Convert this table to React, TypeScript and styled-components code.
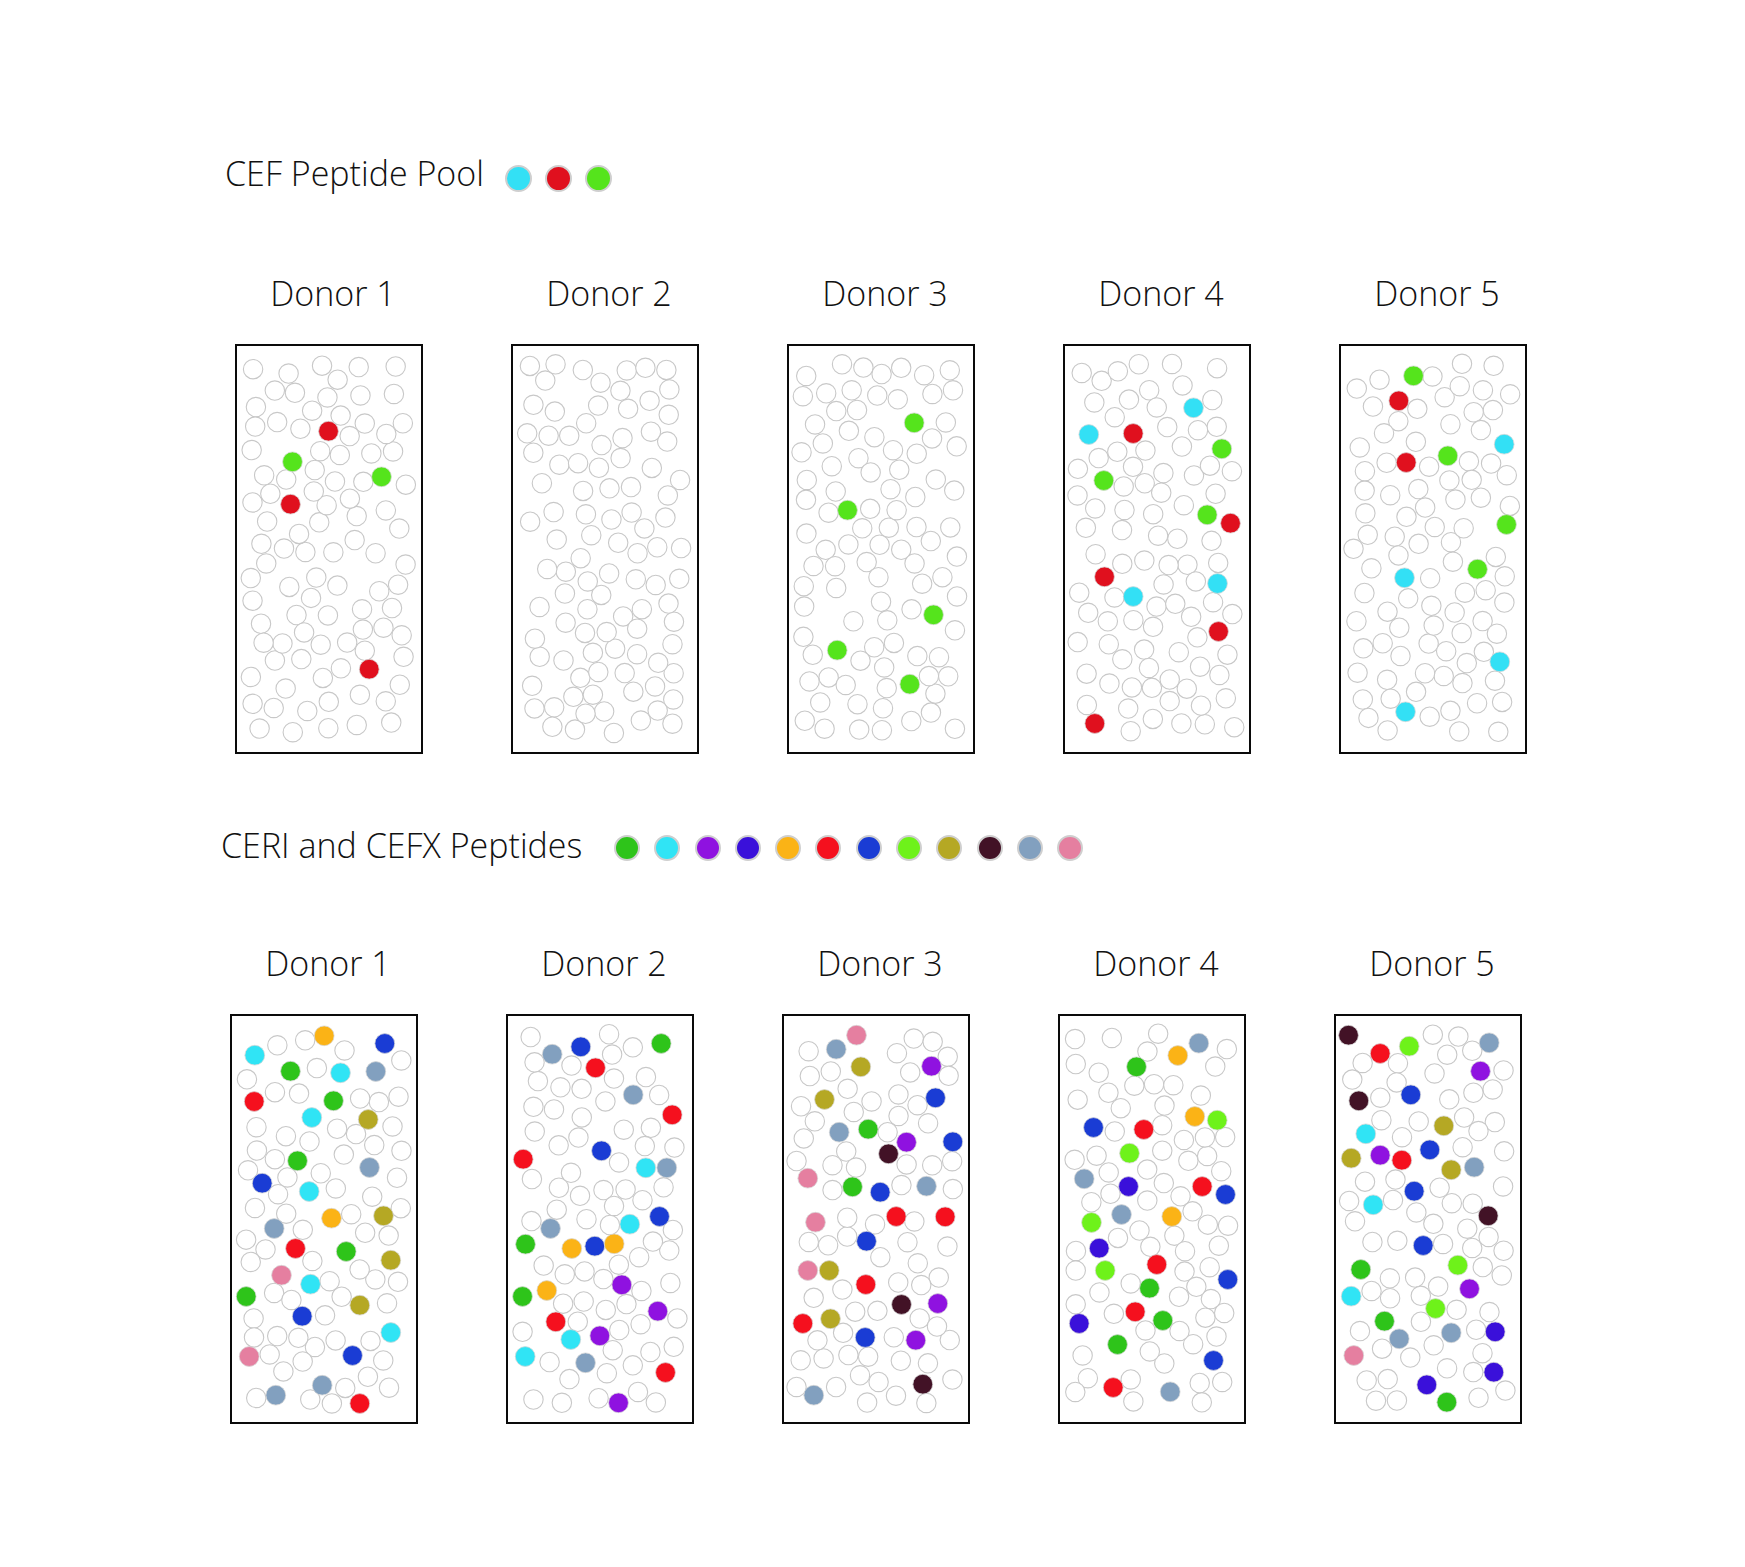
import React, { useMemo } from 'react';
import styled, { createGlobalStyle } from 'styled-components';

const GlobalStyle = createGlobalStyle`
  html, body { margin: 0; padding: 0; background: #ffffff; }
  body { font-family: "Open Sans", "Liberation Sans", sans-serif; color: #111; }
`;

const COLORS: Record<string, string> = {
  cy: '#33e0f5',
  rd: '#e0101e',
  gn: '#55e41c',
  G: '#2ec41a',
  Cy: '#30e4f5',
  pu: '#8f12e0',
  in: '#3a10da',
  or: '#fbb316',
  R: '#f5101e',
  bl: '#1a3cd4',
  li: '#6ef21a',
  ol: '#b5a824',
  ma: '#421226',
  sg: '#82a0bf',
  pk: '#e57fa0',
};

type Dot = [number, number, string];

const TOP_PANELS: Dot[][] = [
  [[94, 87.7, 'rd'], [58, 118.3, 'gn'], [147, 133.3, 'gn'], [56, 160.7, 'rd'], [134.7, 325.7, 'rd']],
  [],
  [[127.7, 79.3, 'gn'], [61, 166.7, 'gn'], [147, 271.3, 'gn'], [50.7, 306.7, 'gn'], [123.3, 340.7, 'gn']],
  [
    [131, 64.3, 'cy'], [26.3, 91, 'cy'], [70.7, 90, 'rd'], [159.3, 105.3, 'gn'], [41.3, 137, 'gn'],
    [144.7, 171.3, 'gn'], [168, 179.7, 'rd'], [42, 233.3, 'rd'], [155, 240, 'cy'], [70.7, 253, 'cy'],
    [156, 288, 'rd'], [32.3, 380, 'rd'],
  ],
  [
    [75, 32.3, 'gn'], [60.3, 57.3, 'rd'], [67.7, 119, 'rd'], [109.3, 112.3, 'gn'], [165.7, 100.7, 'cy'],
    [168, 181, 'gn'], [139, 225.7, 'gn'], [66, 234.3, 'cy'], [161.3, 318.3, 'cy'], [67, 368.3, 'cy'],
  ],
];

const BOTTOM_PANELS: Dot[][] = [
  [
    [25.3, 41.7, 'Cy'], [94.7, 22.3, 'or'], [155.3, 30, 'bl'], [61, 57.7, 'G'], [111, 59.3, 'Cy'],
    [146.3, 58, 'sg'], [24.7, 88, 'R'], [104, 87.3, 'G'], [82.3, 104, 'Cy'], [138.7, 106, 'ol'],
    [68, 147.3, 'G'], [140, 154, 'sg'], [32.7, 169.7, 'bl'], [79.7, 178, 'Cy'], [102, 204.7, 'or'],
    [154, 202.3, 'ol'], [44.7, 215, 'sg'], [66, 235, 'R'], [116.7, 238, 'G'], [161.3, 246.7, 'ol'],
    [52, 261.7, 'pk'], [81, 270.7, 'Cy'], [16.7, 283, 'G'], [130.3, 291.7, 'ol'], [72.7, 302.7, 'bl'],
    [161.3, 319, 'Cy'], [19.7, 343, 'pk'], [123, 342, 'bl'], [92.7, 371.7, 'sg'], [46.3, 381.7, 'sg'],
    [130.3, 390, 'R'],
  ],
  [
    [46.7, 40.7, 'sg'], [75.3, 33.3, 'bl'], [155.7, 30, 'G'], [90, 54.3, 'R'], [127.7, 81.3, 'sg'],
    [166.7, 101.3, 'R'], [96, 137.3, 'bl'], [17.7, 145.7, 'R'], [140.3, 154.3, 'Cy'], [161.3, 154.3, 'sg'],
    [154, 203, 'bl'], [124.3, 210.7, 'Cy'], [45, 215, 'sg'], [20, 230.7, 'G'], [66.3, 235, 'or'],
    [89.3, 232.7, 'bl'], [108.7, 230.3, 'or'], [116.3, 271.3, 'pu'], [17, 283, 'G'], [41.3, 277, 'or'],
    [152.3, 297.7, 'pu'], [50.3, 308.3, 'R'], [65.3, 326, 'Cy'], [94.3, 322.3, 'pu'], [19.7, 343, 'Cy'],
    [80, 349.3, 'sg'], [160, 359, 'R'], [113, 389.3, 'pu'],
  ],
  [
    [75, 21.7, 'pk'], [54.7, 35.7, 'sg'], [79.3, 53.3, 'ol'], [150, 52.7, 'pu'], [43, 86, 'ol'],
    [154, 84.3, 'bl'], [57.7, 118.7, 'sg'], [86.7, 115.7, 'G'], [125, 128.7, 'pu'], [171.3, 128.3, 'bl'],
    [107, 140.3, 'ma'], [26.3, 164.7, 'pk'], [71, 173.3, 'G'], [98.7, 178.7, 'bl'], [145, 172.7, 'sg'],
    [114.7, 203, 'R'], [163.7, 203.3, 'R'], [34, 208.7, 'pk'], [85, 227.7, 'bl'], [26.3, 257, 'pk'],
    [47.7, 257, 'ol'], [84.3, 271, 'R'], [120, 291, 'ma'], [156.3, 290, 'pu'], [21.3, 310, 'R'],
    [49, 305.3, 'ol'], [83.7, 324, 'bl'], [134.3, 326.7, 'pu'], [141.3, 370.7, 'ma'], [32.3, 381.7, 'sg'],
  ],
  [
    [141.3, 29.7, 'sg'], [120.3, 42, 'or'], [79, 53.3, 'G'], [137.3, 103, 'or'], [159.7, 106.7, 'li'],
    [36, 114, 'bl'], [86.3, 116, 'R'], [72, 139.7, 'li'], [26.7, 165.3, 'sg'], [71, 173, 'in'],
    [144.7, 173, 'R'], [168, 181, 'bl'], [64, 201, 'sg'], [114.3, 203, 'or'], [34, 209, 'li'],
    [41.7, 234.7, 'in'], [47.7, 257, 'li'], [99.3, 251, 'R'], [170.3, 266, 'bl'], [92, 274.7, 'G'],
    [77.7, 298.3, 'R'], [105.3, 307, 'G'], [21.7, 310, 'in'], [60, 331, 'G'], [156, 347, 'bl'],
    [55.7, 374, 'R'], [112.7, 378.3, 'sg'],
  ],
  [
    [15, 21.7, 'ma'], [46.7, 40, 'R'], [75.7, 32.7, 'li'], [155.7, 29.3, 'sg'], [147, 57.7, 'pu'],
    [25.3, 87.3, 'ma'], [77.3, 81.3, 'bl'], [110.3, 112.3, 'ol'], [32.3, 120.3, 'Cy'], [17.7, 144.7, 'ol'],
    [46.7, 141.7, 'pu'], [68.3, 146.7, 'R'], [96.3, 136.3, 'bl'], [117.7, 156.3, 'ol'], [140.7, 153.7, 'sg'],
    [80.7, 177.7, 'bl'], [39.7, 191.3, 'Cy'], [154.7, 202.3, 'ma'], [89.7, 232, 'bl'], [27.3, 256, 'G'],
    [124.3, 251.7, 'li'], [136, 275.3, 'pu'], [17.7, 282.7, 'Cy'], [102, 295, 'li'], [51, 307.7, 'G'],
    [65.7, 325.3, 'sg'], [117.7, 319.3, 'sg'], [161.7, 318.3, 'in'], [20.3, 342, 'pk'], [160.3, 358.7, 'in'],
    [93.3, 371.3, 'in'], [113.3, 388.7, 'G'],
  ],
];

const TOP_LEGEND = ['cy', 'rd', 'gn'];
const BOTTOM_LEGEND = ['G', 'Cy', 'pu', 'in', 'or', 'R', 'bl', 'li', 'ol', 'ma', 'sg', 'pk'];

function mulberry32(a: number) {
  return function () {
    a |= 0;
    a = (a + 0x6d2b79f5) | 0;
    let t = Math.imul(a ^ (a >>> 15), 1 | a);
    t = (t + Math.imul(t ^ (t >>> 7), 61 | t)) ^ t;
    return ((t ^ (t >>> 14)) >>> 0) / 4294967296;
  };
}

function generateEmpty(fixed: Dot[], seed: number, target: number): [number, number][] {
  const rand = mulberry32(seed);
  const pts: [number, number][] = fixed.map(([x, y]) => [x, y]);
  const empties: [number, number][] = [];
  const dmin = 18.6;
  let attempts = 0;
  while (pts.length < target && attempts < 40000) {
    attempts++;
    const x = 15 + rand() * 157;
    const y = 20 + rand() * 370;
    let ok = true;
    for (let i = 0; i < pts.length; i++) {
      const dx = pts[i][0] - x;
      const dy = pts[i][1] - y;
      if (dx * dx + dy * dy < dmin * dmin) {
        ok = false;
        break;
      }
    }
    if (ok) {
      pts.push([x, y]);
      empties.push([x, y]);
    }
  }
  return empties;
}

const Page = styled.div`
  width: 1745px;
  min-height: 1567px;
  box-sizing: border-box;
  padding-top: 157px;
`;

const Section = styled.section<{ $left: number; $top: number }>`
  display: flex;
  flex-direction: column;
  padding-left: ${(p) => p.$left}px;
  margin-top: ${(p) => p.$top}px;
`;

const LegendRow = styled.div`
  display: flex;
  align-items: flex-start;
`;

const LegendLabel = styled.div<{ $width: number }>`
  width: ${(p) => p.$width}px;
  flex: none;
  font-family: "Open Sans", "Liberation Sans", sans-serif;
  font-weight: 300;
  font-size: 34px;
  line-height: 32px;
  color: #111;
  white-space: nowrap;
`;

const DotGroup = styled.div<{ $offset: number; $gap: number }>`
  display: flex;
  margin-top: ${(p) => p.$offset}px;
  gap: ${(p) => p.$gap}px;
`;

const LegendDot = styled.span<{ $color: string; $size: number }>`
  display: block;
  width: ${(p) => p.$size}px;
  height: ${(p) => p.$size}px;
  box-sizing: border-box;
  border-radius: 50%;
  background: ${(p) => p.$color};
  border: 2px solid #cfcfcf;
`;

const DonorGrid = styled.div<{ $offset: number; $top: number }>`
  display: grid;
  grid-template-columns: repeat(5, 188px);
  column-gap: 88px;
  margin-left: ${(p) => p.$offset}px;
  margin-top: ${(p) => p.$top}px;
`;

const DonorColumn = styled.div`
  display: flex;
  flex-direction: column;
  align-items: center;
  gap: 35px;
`;

const DonorTitle = styled.div`
  padding-left: 8px;
  font-family: "Open Sans", "Liberation Sans", sans-serif;
  font-weight: 300;
  font-size: 34px;
  line-height: 32px;
  color: #111;
  white-space: nowrap;
`;

const Panel = styled.div`
  width: 188px;
  height: 410px;
  box-sizing: border-box;
  border: 2.5px solid #0a0a0a;
  background: #fff;
`;

const PanelSvg = styled.svg`
  display: block;
  width: 183px;
  height: 405px;
`;

const EmptyCell = styled.circle`
  fill: #ffffff;
  stroke: #c8c8c8;
  stroke-width: 1.1;
`;

const FilledCell = styled.circle`
  stroke: rgba(215, 215, 215, 0.75);
  stroke-width: 1;
`;

function SpotPanel({ dots, seed }: { dots: Dot[]; seed: number }) {
  const empties = useMemo(() => generateEmpty(dots, seed, 97), [dots, seed]);
  return (
    <Panel>
      <PanelSvg viewBox="2.5 2.5 183 405">
        {empties.map(([x, y], i) => (
          <EmptyCell key={`e${i}`} cx={x} cy={y} r={9.7} />
        ))}
        {dots.map(([x, y, c], i) => (
          <FilledCell key={`f${i}`} cx={x} cy={y} r={9.9} fill={COLORS[c]} />
        ))}
      </PanelSvg>
    </Panel>
  );
}

function DonorRow({ panels, seedBase, offset, top }: { panels: Dot[][]; seedBase: number; offset: number; top: number }) {
  return (
    <DonorGrid $offset={offset} $top={top}>
      {panels.map((dots, i) => (
        <DonorColumn key={i}>
          <DonorTitle>Donor {i + 1}</DonorTitle>
          <SpotPanel dots={dots} seed={seedBase + i * 97} />
        </DonorColumn>
      ))}
    </DonorGrid>
  );
}

export default function App() {
  return (
    <>
      <GlobalStyle />
      <Page>
        <Section $left={225} $top={0}>
          <LegendRow>
            <LegendLabel $width={280}>CEF Peptide Pool</LegendLabel>
            <DotGroup $offset={8} $gap={13}>
              {TOP_LEGEND.map((c) => (
                <LegendDot key={c} $color={COLORS[c]} $size={27} />
              ))}
            </DotGroup>
          </LegendRow>
          <DonorRow panels={TOP_PANELS} seedBase={1234} offset={10} top={85} />
        </Section>
        <Section $left={221} $top={75}>
          <LegendRow>
            <LegendLabel $width={393}>CERI and CEFX Peptides</LegendLabel>
            <DotGroup $offset={6} $gap={14.3}>
              {BOTTOM_LEGEND.map((c) => (
                <LegendDot key={c} $color={COLORS[c]} $size={26} />
              ))}
            </DotGroup>
          </LegendRow>
          <DonorRow panels={BOTTOM_PANELS} seedBase={5678} offset={9} top={86} />
        </Section>
      </Page>
    </>
  );
}
